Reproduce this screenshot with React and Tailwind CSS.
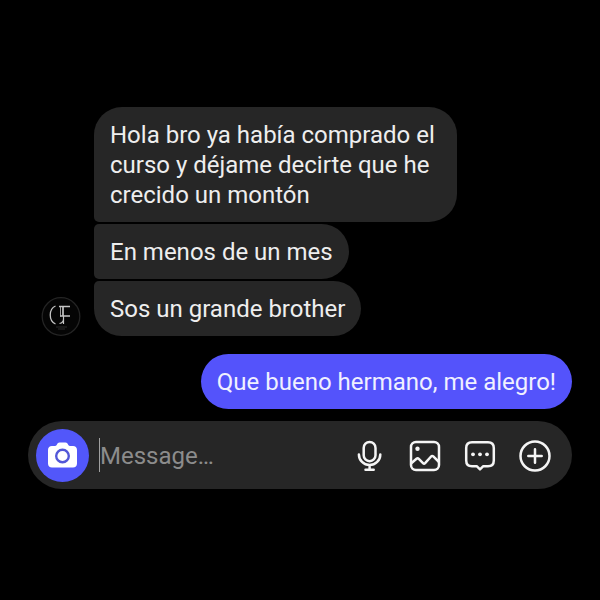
import clsx from "clsx"

const RECEIVED = [
  { id: 1, text: "Hola bro ya había comprado el curso y déjame decirte que he crecido un montón" },
  { id: 2, text: "En menos de un mes" },
  { id: 3, text: "Sos un grande brother" },
]

const ACTIONS = [
  { label: "Voice message", Icon: MicIcon },
  { label: "Gallery", Icon: GalleryIcon },
  { label: "Quick replies", Icon: CommentIcon },
  { label: "More", Icon: PlusIcon },
]

export default function App() {
  return (
    <main className="min-h-screen bg-black px-7 pt-[107px] pb-8 font-['Roboto',sans-serif] text-2xl leading-[30px]">
      <section className="flex items-end gap-[13px] pl-[13px]">
        <Avatar />
        <ul className="flex flex-col items-start gap-0.5">
          {RECEIVED.map((message, i) => (
            <li
              key={message.id}
              className={clsx(
                "max-w-[363px] rounded-r-[28px] bg-[#262626] px-4 pt-[13px] pb-3 text-[#eeeeee]",
                i === 0 ? "rounded-tl-[28px]" : "rounded-tl-[5px]",
                i === RECEIVED.length - 1 ? "rounded-bl-[28px]" : "rounded-bl-[5px]"
              )}
            >
              {message.text}
            </li>
          ))}
        </ul>
      </section>

      <section className="mt-[18px] flex justify-end">
        <p className="rounded-[28px] bg-[#5453fb] px-4 pt-[13px] pb-3 text-[#f0f0ff]">
          Que bueno hermano, me alegro!
        </p>
      </section>

      <Composer />
    </main>
  )
}

function Composer() {
  return (
    <form
      className="mt-3 flex h-[68px] items-center rounded-full bg-[#262626] pr-[21px] pl-2"
      onSubmit={(e) => e.preventDefault()}
    >
      <button
        type="button"
        aria-label="Camera"
        className="flex size-[53px] shrink-0 items-center justify-center rounded-full bg-[#5257fa]"
      >
        <CameraIcon />
      </button>
      <input
        type="text"
        aria-label="Message"
        placeholder="Message…"
        className="ml-[10px] h-[34px] min-w-0 flex-1 border-l border-[#a0a0a0] pt-0.5 text-white outline-none placeholder:text-[#8c8c8c]"
      />
      <div className="flex gap-[23px] pt-0.5 text-[#f5f5f5]">
        {ACTIONS.map(({ label, Icon }) => (
          <button key={label} type="button" aria-label={label} className="size-8">
            <Icon />
          </button>
        ))}
      </div>
    </form>
  )
}

function Avatar() {
  return (
    <svg viewBox="0 0 40 40" className="size-10 shrink-0" role="img" aria-label="GF">
      <circle cx="20" cy="20.5" r="18.8" fill="#050505" stroke="#242424" strokeWidth="1.3" />
      <g fill="none" stroke="#c4c4c4" strokeWidth="1.3">
        <path d="M14.5 10C7.5 13 7.5 25 14.5 28" />
        <path d="M18 10.500h11M19 20h10" />
        <path d="M22 10.500V20" strokeWidth="1.7" />
        <path d="M19.500 11V20.500" strokeWidth="0.8" />
        <path d="M22.500 20v8M18.500 27.500c2.500-.5 4-2 4-4.500" strokeWidth="1.2" />
      </g>
      <path d="M15 31h11M17 33h7" stroke="#2a2a2a" strokeWidth="1" />
    </svg>
  )
}

function CameraIcon() {
  return (
    <svg viewBox="0 0 29 26" className="h-[26px] w-[29px]">
      <path
        fill="#fff"
        d="M4 4h3.2c.8 0 1.2-.5 1.6-1.2C9.6 1.2 10.2.5 11.5.5h6c1.3 0 1.9.7 2.7 2.3.4.7.8 1.2 1.6 1.2H25c2.4 0 4 1.6 4 4v13.500c0 2.400-1.600 4-4 4H4c-2.400 0-4-1.600-4-4V8c0-2.400 1.600-4 4-4Z"
      />
      <circle cx="14.5" cy="14" r="6.3" fill="none" stroke="#5257d8" strokeWidth="2.4" />
    </svg>
  )
}

function MicIcon() {
  return (
    <svg viewBox="0 0 32 32" className="size-8" fill="none" stroke="currentColor" strokeWidth="2.5" strokeLinecap="round">
      <rect x="9.7" y="2" width="11.8" height="19.2" rx="5.9" />
      <path d="M4.9 14.4a10.7 10.7 0 0 0 21.4 0M15.6 25.2v4.5M11.5 29.7h8.2" />
    </svg>
  )
}

function GalleryIcon() {
  return (
    <svg viewBox="0 0 32 32" className="size-8" fill="none" stroke="currentColor" strokeWidth="2.5" strokeLinejoin="round">
      <rect x="2" y="2" width="28" height="28" rx="5" />
      <circle cx="8.5" cy="8.7" r="2.2" fill="currentColor" stroke="none" />
      <path d="M2 23.5l5.5-4.7c.8-.7 1.6-.6 2.3.1l4.2 4.3c.7.7 1.4.7 2.1 0l6-6.7c.7-.8 1.5-.8 2.2-.1L30 22" />
    </svg>
  )
}

function CommentIcon() {
  return (
    <svg viewBox="0 0 32 32" className="size-8" fill="none" stroke="currentColor" strokeWidth="2.5" strokeLinejoin="round">
      <path d="M8 2.2h16c3.7 0 5.8 2.1 5.8 5.8v12.4c0 3.7-2.1 5.8-5.8 5.8h-4.7L16 29.4l-3.3-3.2H8c-3.7 0-5.8-2.1-5.8-5.8V8c0-3.7 2.1-5.8 5.8-5.8Z" />
      <g fill="currentColor" stroke="none">
        <circle cx="9" cy="14.3" r="1.9" />
        <circle cx="16" cy="14.3" r="1.9" />
        <circle cx="23" cy="14.3" r="1.9" />
      </g>
    </svg>
  )
}

function PlusIcon() {
  return (
    <svg viewBox="0 0 32 32" className="size-8" fill="none" stroke="currentColor" strokeWidth="2.5" strokeLinecap="round">
      <circle cx="16" cy="16" r="14.5" />
      <path d="M16 9.3v13.4M9.3 16h13.4" />
    </svg>
  )
}
